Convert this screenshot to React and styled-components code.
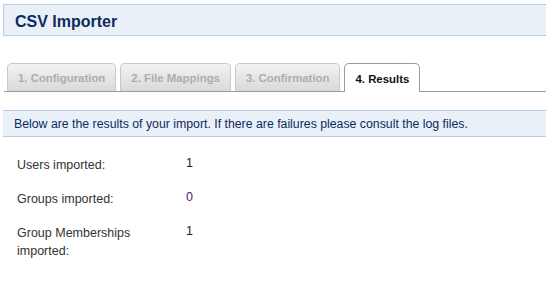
import React from "react";
import styled, { createGlobalStyle } from "styled-components";

const GlobalStyle = createGlobalStyle`
  body {
    margin: 0;
    background: #fff;
    font-family: "Liberation Sans", Arial, sans-serif;
  }
`;

const Page = styled.div`
  width: 546px;
  height: 290px;
  overflow: hidden;
`;

const Header = styled.div`
  margin: 4px 0 0 3px;
  box-sizing: border-box;
  height: 32px;
  display: flex;
  align-items: center;
  padding: 3px 0 0 11px;
  background-color: #eaf0f8;
  border: 1px solid #b9cbe0;
  border-right: 0;
`;

const Title = styled.h1`
  margin: 0;
  font-size: 16px;
  font-weight: bold;
  color: #0d2b5e;
`;

const TabBar = styled.div`
  display: flex;
  align-items: flex-end;
  gap: 4px;
  margin: 26px 0 0 4px;
  padding-left: 3px;
  height: 29px;
  border-bottom: 1px solid #9c9c9c;
`;

const Tab = styled.div`
  height: 28px;
  box-sizing: border-box;
  display: flex;
  align-items: center;
  font-size: 11.4px;
  font-weight: bold;
  border-radius: 5px 5px 0 0;
  ${props => props.active ? `
    height: 29px;
    margin-bottom: -1px;
    padding: 1px 10px 0;
    background: #fff;
    color: #111;
    border: 1px solid #9c9c9c;
    border-bottom: 0;
  ` : `
    padding: 1px 10px 0;
    background: linear-gradient(#f3f3f3, #d9d9d9);
    color: #adadad;
    border: 1px solid #c9c9c9;
    border-bottom: 0;
  `}
`;

const InfoBar = styled.div`
  margin: 18px 0 0 3px;
  height: 25px;
  display: flex;
  align-items: center;
  padding-left: 11px;
  background-color: #eaf0f8;
  border-top: 1px solid #b9cbe0;
  border-bottom: 1px solid #b9cbe0;
  font-size: 12.3px;
  color: #0d2b5e;
`;

const Results = styled.div`
  display: grid;
  grid-template-columns: 169px auto;
  row-gap: 16px;
  margin: 19px 0 0 17px;
  font-size: 12.5px;
  line-height: 18px;
`;

const Label = styled.div`
  width: 140px;
  color: #333;
`;

const Value = styled.div`
  color: ${props => props.muted ? "#3d2670" : "#222"};
  margin-top: -2px;
`;

const tabs = ["1. Configuration", "2. File Mappings", "3. Confirmation", "4. Results"];

const results = [
  { label: "Users imported:", value: 1 },
  { label: "Groups imported:", value: 0 },
  { label: "Group Memberships imported:", value: 1 },
];

export default function App() {
  return (
    <Page>
      <GlobalStyle />
      <Header>
        <Title>CSV Importer</Title>
      </Header>
      <TabBar>
        {tabs.map((t, i) => (
          <Tab key={t} active={i === tabs.length - 1}>{t}</Tab>
        ))}
      </TabBar>
      <InfoBar>
        Below are the results of your import. If there are failures please consult the log files.
      </InfoBar>
      <Results>
        {results.map(r => (
          <React.Fragment key={r.label}>
            <Label>{r.label}</Label>
            <Value muted={r.value === 0}>{r.value}</Value>
          </React.Fragment>
        ))}
      </Results>
    </Page>
  );
}
